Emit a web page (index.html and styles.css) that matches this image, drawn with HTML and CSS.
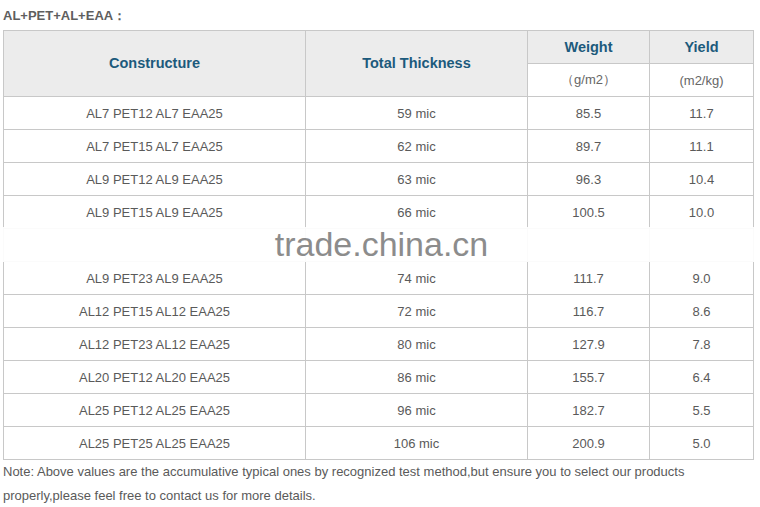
FILE: index.html
```html
<!DOCTYPE html>
<html>
<head>
<meta charset="utf-8">
<link rel="stylesheet" href="styles.css">
</head>
<body>
<div class="page">
  <div class="title">AL+PET+AL+EAA：</div>
  <div class="table-wrap">
    <table class="spec">
      <colgroup>
        <col class="c1"><col class="c2"><col class="c3"><col class="c4">
      </colgroup>
      <thead>
        <tr>
          <th rowspan="2">Constructure</th>
          <th rowspan="2">Total Thickness</th>
          <th>Weight</th>
          <th>Yield</th>
        </tr>
        <tr class="units">
          <td>（g/m2）</td>
          <td>(m2/kg)</td>
        </tr>
      </thead>
      <tbody>
        <tr><td>AL7 PET12 AL7 EAA25</td><td>59 mic</td><td>85.5</td><td>11.7</td></tr>
        <tr><td>AL7 PET15 AL7 EAA25</td><td>62 mic</td><td>89.7</td><td>11.1</td></tr>
        <tr><td>AL9 PET12 AL9 EAA25</td><td>63 mic</td><td>96.3</td><td>10.4</td></tr>
        <tr><td>AL9 PET15 AL9 EAA25</td><td>66 mic</td><td>100.5</td><td>10.0</td></tr>
        <tr class="hidden-row"><td></td><td></td><td></td><td></td></tr>
        <tr><td>AL9 PET23 AL9 EAA25</td><td>74 mic</td><td>111.7</td><td>9.0</td></tr>
        <tr><td>AL12 PET15 AL12 EAA25</td><td>72 mic</td><td>116.7</td><td>8.6</td></tr>
        <tr><td>AL12 PET23 AL12 EAA25</td><td>80 mic</td><td>127.9</td><td>7.8</td></tr>
        <tr><td>AL20 PET12 AL20 EAA25</td><td>86 mic</td><td>155.7</td><td>6.4</td></tr>
        <tr><td>AL25 PET12 AL25 EAA25</td><td>96 mic</td><td>182.7</td><td>5.5</td></tr>
        <tr><td>AL25 PET25 AL25 EAA25</td><td>106 mic</td><td>200.9</td><td>5.0</td></tr>
      </tbody>
    </table>
    <div class="watermark">trade.china.cn</div>
  </div>
  <p class="note">Note: Above values are the accumulative typical ones by recognized test method,but ensure you to select our products properly,please feel free to contact us for more details.</p>
</div>
</body>
</html>
```

FILE: styles.css
```css
html, body {
  margin: 0;
  padding: 0;
  background: #fff;
}
.page {
  width: 760px;
  padding-left: 3px;
  box-sizing: border-box;
  font-family: "Liberation Sans", Arial, sans-serif;
}
.title {
  height: 30px;
  line-height: 32px;
  font-size: 13px;
  font-weight: bold;
  color: #5e5e5e;
  white-space: nowrap;
}
.table-wrap {
  position: relative;
  width: 750px;
}
.spec {
  border-collapse: collapse;
  table-layout: fixed;
  width: 750px;
  font-size: 13px;
  color: #5a5a5a;
}
.c1 { width: 302px; }
.c2 { width: 222px; }
.c3 { width: 122px; }
.c4 { width: 104px; }
.spec tr {
  height: 33px;
}
.spec th,
.spec td {
  border: 1px solid #c8c8c8;
  padding: 0;
  text-align: center;
  vertical-align: middle;
}
.spec th {
  background: #ececec;
  color: #1c5a7c;
  font-size: 14.5px;
  font-weight: bold;
}
.spec thead tr:first-child th[rowspan] {
  padding-bottom: 2px;
}
.units td {
  background: #fff;
  color: #666;
}
.watermark {
  position: absolute;
  left: -3px;
  right: -10px;
  top: 197px;
  height: 35px;
  background: rgba(255, 255, 255, 0.92);
  color: #8c8c8c;
  font-size: 34px;
  line-height: 34px;
  text-align: center;
  padding-left: 0;
}
.note {
  margin: 0;
  width: 720px;
  font-size: 13px;
  line-height: 24px;
  color: #5a5a5a;
}
```
